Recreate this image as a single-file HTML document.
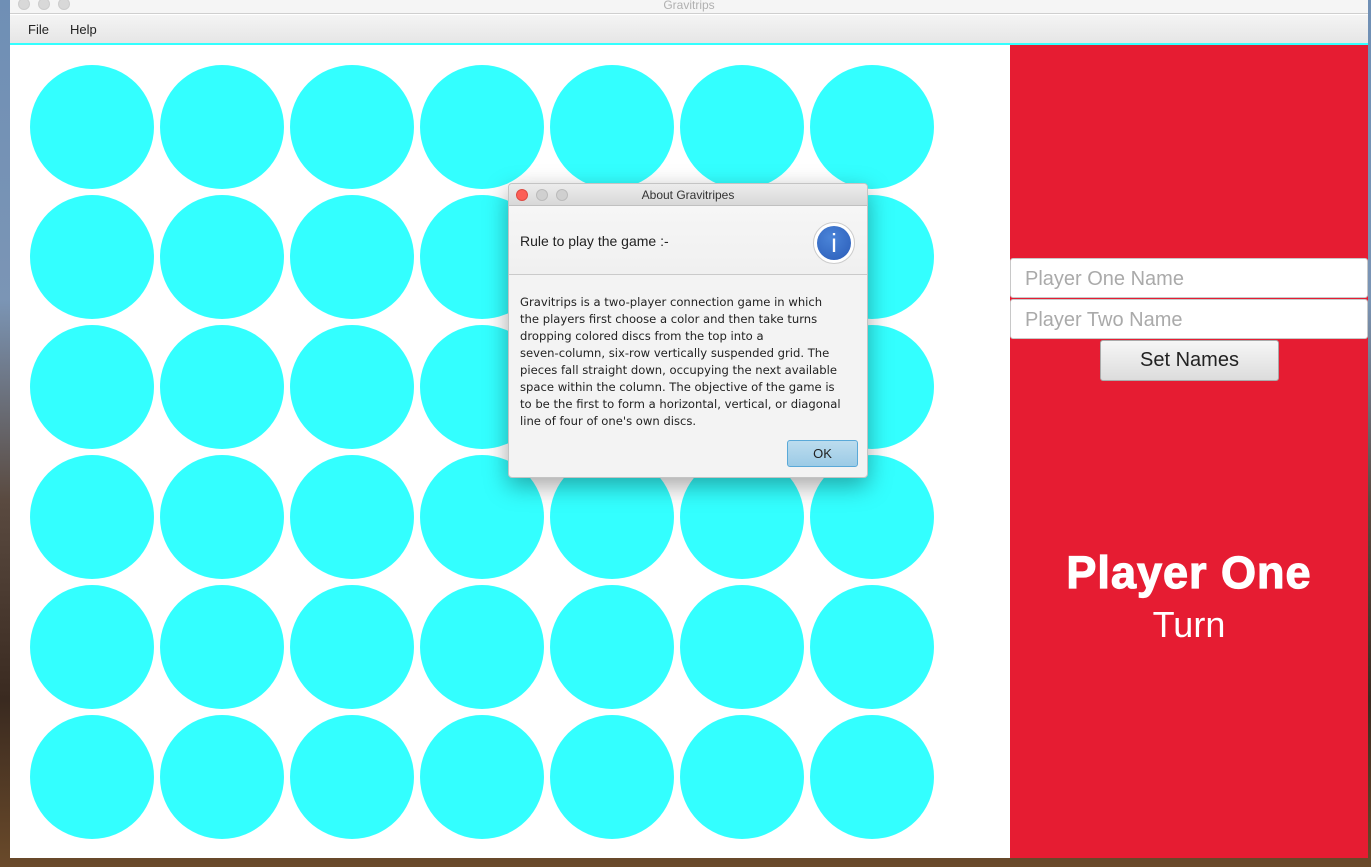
<!DOCTYPE html>
<html><head><meta charset="utf-8"><style>
*{margin:0;padding:0;box-sizing:border-box}
body{width:1371px;height:867px;overflow:hidden;position:relative;font-family:"Liberation Sans",sans-serif;background:linear-gradient(#6f8fb5 0,#7b95b5 300px,#5a4a40 500px,#3a2a20 700px,#6a4a2a 867px)}
.win{position:absolute;left:10px;top:0;width:1358px;height:858px;background:#fff}
.tb{position:absolute;left:0;top:0;width:100%;height:14px;background:#f5f5f5;border-bottom:1px solid #cfcfcf;text-align:center;font-size:12px;color:#b0b0b0;line-height:10px}
.dot{position:absolute;top:-2px;width:12px;height:12px;border-radius:50%;background:#d8d8d8;border:1px solid #ccc}
.mb{position:absolute;left:0;top:15px;width:100%;height:28px;background:linear-gradient(#f4f4f4,#e6e6e6);font-size:13px;color:#222}
.mb span{position:absolute;top:7px}
.cl{position:absolute;left:0;top:43px;width:100%;height:2px;background:#33ffff}
.c{position:absolute;width:124px;height:124px;border-radius:50%;background:#33ffff}
.red{position:absolute;left:1010px;top:45px;width:358px;height:813px;background:#e61c32}
.inp{position:absolute;left:0;width:358px;height:40px;background:#fff;border:1px solid #c8c8c8;border-radius:3px;font-size:20px;color:#aaa;padding:9px 0 0 14px}
.btn{position:absolute;left:90px;top:295px;width:179px;height:41px;background:linear-gradient(#f6f6f6,#dcdcdc);border:1px solid #aaa;border-radius:3px;font-size:20px;color:#222;text-align:center;line-height:38px}
.dlg{position:absolute;left:508px;top:183px;width:360px;height:295px;background:#f3f3f3;border:1px solid #c4c4c4;border-radius:4px;box-shadow:0 8px 24px rgba(0,0,0,.35);overflow:hidden}
.dt{height:22px;background:linear-gradient(#ececec,#d8d8d8);border-bottom:1px solid #c0c0c0;text-align:center;font-size:12px;color:#333;line-height:22px;position:relative}
.dd{position:absolute;top:5px;width:12px;height:12px;border-radius:50%;background:#d0d0d0;border:1px solid #bbb}
.hd{height:69px;background:linear-gradient(#f6f6f6,#f0f0f0);border-bottom:1px solid #cacaca;position:relative}
</style></head><body>
<div class="win">
<div class="tb"><div class="dot" style="left:8px"></div><div class="dot" style="left:28px"></div><div class="dot" style="left:48px"></div>Gravitrips</div>
<div class="mb"><span style="left:18px">File</span><span style="left:60px">Help</span></div>
<div class="cl"></div>
</div>
<div id="g"></div>
<script>
var h='';for(var r=0;r<6;r++)for(var c=0;c<7;c++)h+='<div class="c" style="left:'+(30+c*130)+'px;top:'+(65+r*130)+'px"></div>';document.getElementById('g').innerHTML=h;
</script>
<div class="red">
<div class="inp" style="top:213px">Player One Name</div>
<div class="inp" style="top:254px">Player Two Name</div>
<div class="btn">Set Names</div>
<div style="position:absolute;left:0;width:358px;top:502px;text-align:center;color:#fff;font-weight:bold;font-size:45px;letter-spacing:1px;-webkit-text-stroke:1.2px #fff">Player One</div>
<div style="position:absolute;left:0;width:358px;top:559px;text-align:center;color:#fff;font-size:36px">Turn</div>
</div>
<div class="dlg">
<div class="dt"><div class="dd" style="left:7px;background:#fc5f57;border-color:#de4a42"></div><div class="dd" style="left:27px"></div><div class="dd" style="left:47px"></div>About Gravitripes</div>
<div class="hd"><div style="position:absolute;left:11px;top:27px;font-size:14px;color:#222">Rule to play the game :-</div>
<div style="position:absolute;left:304px;top:16px;width:42px;height:42px;border-radius:50%;background:#fff;border:1px solid #ccc"><div style="position:absolute;left:3px;top:3px;width:34px;height:34px;border-radius:50%;background:radial-gradient(circle at 40% 35%,#4a84d8,#2a5cb8);color:#fff;font-size:26px;text-align:center;line-height:34px">i</div></div></div>
<div style="position:absolute;left:11px;top:110px;white-space:nowrap;font-family:'DejaVu Sans',sans-serif;font-size:11.6px;line-height:17px;color:#222">Gravitrips is a two-player connection game in which<br>the players first choose a color and then take turns<br>dropping colored discs from the top into a<br>seven-column, six-row vertically suspended grid. The<br>pieces fall straight down, occupying the next available<br>space within the column. The objective of the game is<br>to be the first to form a horizontal, vertical, or diagonal<br>line of four of one's own discs.</div>
<div style="position:absolute;left:278px;top:256px;width:71px;height:27px;border:1px solid #5aa9d8;border-radius:3px;background:linear-gradient(#bcdcee,#9ccbe6);font-size:13px;text-align:center;line-height:25px;color:#222">OK</div>
</div>
</body></html>
